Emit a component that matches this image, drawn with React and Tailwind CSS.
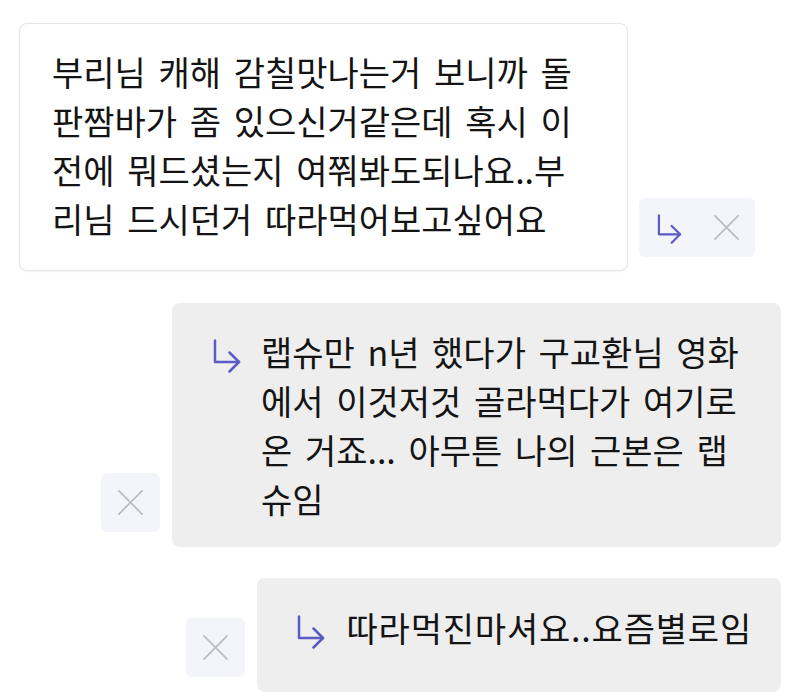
import React from 'react';

const font = { fontFamily: '"Noto Sans CJK KR", "Noto Sans", sans-serif' };

const ReplyIcon = ({ className = '' }) => (
    <svg viewBox="0 0 28 34" className={className} fill="none" stroke="#5b5bc6" strokeWidth="2.5" strokeLinecap="round" strokeLinejoin="round">
        <path d="M2 1.5 V23 H26" />
        <path d="M16.5 13.5 L26 23 L16.5 32.5" />
    </svg>
);

const CloseIcon = ({ className = '' }) => (
    <svg viewBox="0 0 28 28" className={className} fill="none" stroke="#bcbcc0" strokeWidth="1.8" strokeLinecap="round">
        <path d="M2 2 L26 26" />
        <path d="M26 2 L2 26" />
    </svg>
);

const CloseButton = () => (
    <div className="w-[59px] h-[59px] rounded-md bg-[#f4f4fb] flex items-center justify-center">
        <CloseIcon className="w-[27px] h-[27px]" />
    </div>
);

const App = () => {
    return (
        <div className="min-h-screen bg-white text-[#141414] pt-[23px] pl-[19px] pr-[29px]" style={font}>
            {/* Incoming message */}
            <div className="flex items-end gap-[11px]">
                <div className="w-[609px] bg-white border border-[#e4e4e4] rounded-lg shadow-[0_1px_2px_rgba(0,0,0,0.05)] pl-[32px] pr-[40px] pt-[23px] pb-[27px] text-[34px] leading-[49px] [word-spacing:5px]">
                    부리님 캐해 감칠맛나는거 보니까 돌판짬바가 좀 있으신거같은데 혹시 이전에 뭐드셨는지 여쭤봐도되나요..부리님 드시던거 따라먹어보고싶어요
                </div>
                <div className="mb-[14px] h-[59px] rounded-md bg-[#f4f4fb] flex items-center pl-[18px] pr-[15px] gap-[31px]">
                    <ReplyIcon className="w-[25px] h-[30px] mt-[2px]" />
                    <CloseIcon className="w-[27px] h-[27px]" />
                </div>
            </div>

            {/* Reply 1 */}
            <div className="flex items-end justify-end gap-[12px] mt-[32px]">
                <div className="mb-[15px]">
                    <CloseButton />
                </div>
                <div className="w-[609px] bg-[#eeeeee] rounded-lg pl-[41px] pr-[30px] pt-[24px] pb-[24px] flex gap-[20px]">
                    <ReplyIcon className="w-[28px] h-[34px] mt-[12px] shrink-0" />
                    <div className="text-[34px] leading-[49px] [word-spacing:5px]">
                        랩슈만 n년 했다가 구교환님 영화에서 이것저것 골라먹다가 여기로 온 거죠... 아무튼 나의 근본은 랩슈임
                    </div>
                </div>
            </div>

            {/* Reply 2 */}
            <div className="flex items-end justify-end gap-[12px] mt-[31px]">
                <div className="mb-[15px]">
                    <CloseButton />
                </div>
                <div className="bg-[#eeeeee] rounded-lg pl-[40px] pr-[29px] pt-[25px] pb-[40px] flex items-start gap-[22px]">
                    <ReplyIcon className="w-[28px] h-[34px] mt-[12px] shrink-0" />
                    <div className="text-[34px] leading-[49px] tracking-[0.8px] whitespace-nowrap">
                        따라먹진마셔요..요즘별로임
                    </div>
                </div>
            </div>
        </div>
    );
};

export default App;
